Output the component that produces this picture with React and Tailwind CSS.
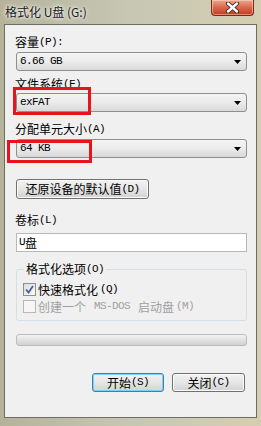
import React from "react";

function Mix({ text }) {
  const parts = text.match(/[\x00-\x7F]+|[^\x00-\x7F]+/g) || [];
  return parts.map((p, i) =>
    /^[\x00-\x7F]/.test(p) ? (
      <span key={i} className="font-['Liberation_Mono'] text-[11px] tracking-[-0.6px] whitespace-pre">
        {p}
      </span>
    ) : (
      <span key={i}>{p}</span>
    )
  );
}

function Label({ text, className = "" }) {
  return (
    <div className={"h-[12px] flex items-center whitespace-nowrap " + className}>
      <Mix text={text} />
    </div>
  );
}

function Combo({ text, className = "" }) {
  return (
    <div
      className={
        "h-[19px] flex items-center rounded-[3px] border border-[#8e8f8f] bg-linear-to-b from-[#f4f4f4] via-[#ebebeb] to-[#d9d9d9] pl-[3px] pr-[5px] " +
        className
      }
    >
      <div className="flex-1 flex items-center">
        <Mix text={text} />
      </div>
      <svg width="7" height="4" viewBox="0 0 7 4">
        <path d="M0 0h7L3.5 4z" fill="#000" />
      </svg>
    </div>
  );
}

function Button({ text, className = "", def = false }) {
  return (
    <div
      className={
        "h-[19px] flex items-center justify-center rounded-[3px] border bg-linear-to-b from-[#f2f2f2] via-[#e6e6e6] to-[#d2d2d2] " +
        (def ? "border-[#3c7fb1] shadow-[inset_0_0_0_1px_#7fd0f5] " : "border-[#707070] shadow-[inset_0_0_0_1px_#fcfcfc] ") +
        className
      }
    >
      <Mix text={text} />
    </div>
  );
}

export default function App() {
  return (
    <div className="relative w-[261px] h-[426px] overflow-hidden bg-linear-to-r from-[#b5b29a] via-[#c6c7b4] to-[#d6ceb2] font-['Noto_Sans_CJK_SC',sans-serif] text-[12px] leading-none text-black">
      {/* title bar */}
      <div className="h-[24px] flex items-start">
        <div className="h-[24px] flex items-center pl-[5px] text-[12px] text-[#1b1b1b] [text-shadow:0_0_6px_#fff,0_0_3px_#fff] whitespace-pre font-['Noto_Sans_CJK_SC',sans-serif]">
          格式化 U盘 (G:)
        </div>
        <div className="ml-auto mr-[7px] w-[43px] h-[16px] rounded-b-[4px] border border-t-0 border-[#7a2a1c] bg-linear-to-b from-[#e9a88f] via-[#d8674d] to-[#c2381f] shadow-[inset_0_0_0_1px_rgba(255,220,200,0.5)] flex items-center justify-center">
          <svg width="15" height="11" viewBox="0 0 15 11">
            <path d="M3 1.5 L12 9.5 M12 1.5 L3 9.5" stroke="#4a2018" strokeWidth="4.2" strokeLinecap="round" />
            <path d="M3 1.5 L12 9.5 M12 1.5 L3 9.5" stroke="#ffffff" strokeWidth="2.4" strokeLinecap="round" />
          </svg>
        </div>
      </div>

      {/* client area */}
      <div className="mx-[4px] h-[394px] border border-[#6e6e60] bg-[#f0f0f0] pl-[11px] pr-[9px] flex flex-col">
        <Label text="容量(P):" className="mt-[11px] -ml-[1px]" />
        <Combo text="6.66 GB" className="mt-[4px]" />
        <Label text="文件系统(F)" className="mt-[7px] -ml-[1px]" />
        <Combo text="exFAT" className="mt-[3px]" />
        <Label text="分配单元大小(A)" className="mt-[11px] -ml-[1px]" />
        <Combo text="64 KB" className="mt-[4px]" />
        <Button text="还原设备的默认值(D)" className="mt-[21px] w-[133px] h-[20px]" />
        <Label text="卷标(L)" className="mt-[15px] -ml-[1px]" />
        <div className="mt-[7px] h-[19px] border border-[#b5b8bf] bg-white flex items-center pl-[2px]">
          <Mix text="U盘" />
        </div>

        <fieldset className="mt-[11px] border border-[#d5dfe5] rounded-[3px] pl-[6px] pb-[7px]">
          <legend className="ml-[1px] px-[2px] h-[12px] flex items-center">
            <Mix text="格式化选项(O)" />
          </legend>
          <div className="mt-[8px] h-[13px] flex items-center gap-[2px]">
            <div className="w-[13px] h-[13px] border border-[#8f8f8f] bg-linear-to-br from-[#dcdcdc] to-[#fbfbfb] flex items-center justify-center">
              <svg width="9" height="9" viewBox="0 0 9 9">
                <path d="M1 4.5 L3.5 7.5 L8 1" stroke="#4a5f97" strokeWidth="1.8" fill="none" />
              </svg>
            </div>
            <Mix text="快速格式化(Q)" />
          </div>
          <div className="mt-[4px] h-[13px] flex items-center gap-[2px] text-[#a0a0a0]">
            <div className="w-[13px] h-[13px] border border-[#b8b8b8] bg-[#f6f6f6]" />
            <Mix text="创建一个 MS-DOS 启动盘(M)" />
          </div>
        </fieldset>

        <div className="mt-[13px] h-[12px] rounded-[3px] border border-[#bcbcbc] bg-linear-to-b from-[#f3f3f3] via-[#e2e2e2] to-[#d0d0d0]" />

        <div className="mt-[27px] flex justify-end gap-[8px] pr-[2px]">
          <Button text="开始(S)" def className="w-[72px]" />
          <Button text="关闭(C)" className="w-[73px]" />
        </div>
      </div>

      {/* annotation boxes */}
      <div className="absolute left-[13px] top-[87px] w-[78px] h-[28px] border-[3px] border-[#e8141b]" />
      <div className="absolute left-[7px] top-[140px] w-[85px] h-[23px] border-[3px] border-[#e8141b]" />
    </div>
  );
}
